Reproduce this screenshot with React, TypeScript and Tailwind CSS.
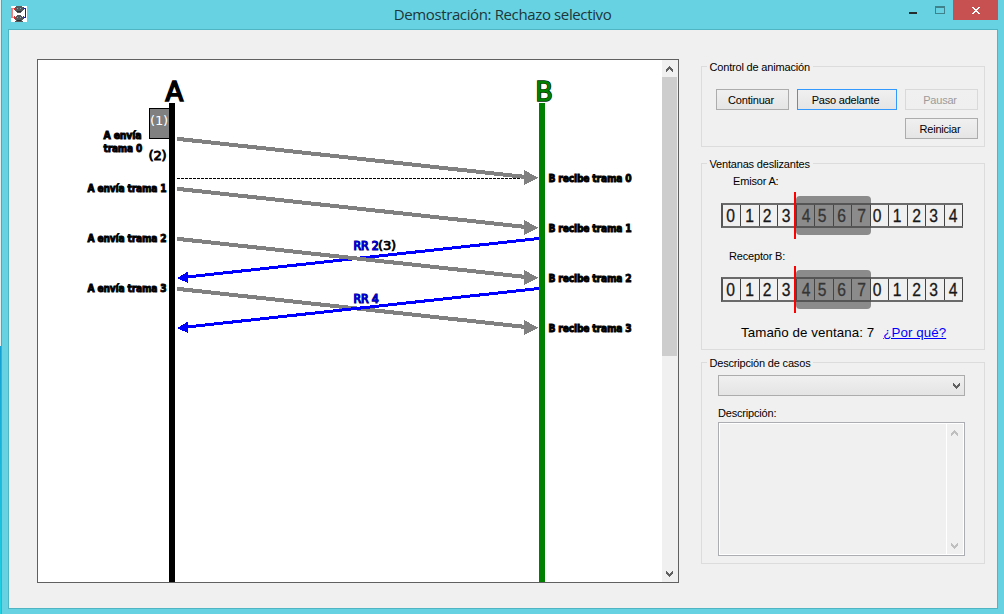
import type { ReactNode } from "react";

type LabelProps = {
  x: number;
  y: number;
  w: number;
  size?: number;
  fill?: string;
  edge?: string;
  weight?: number;
  children: string;
};

function Label({ x, y, w, size = 11, fill = "#000", edge = "#000", weight = 0.95, children }: LabelProps) {
  return (
    <text
      x={x}
      y={y}
      textLength={w}
      lengthAdjust="spacingAndGlyphs"
      fontSize={size}
      fill={fill}
      stroke={edge}
      strokeWidth={weight}
      paintOrder="stroke"
      className="font-['DejaVu_Sans_Condensed','DejaVu_Sans',sans-serif]"
    >
      {children}
    </text>
  );
}

function Frame({ y }: { y: number }) {
  return (
    <g fill="#808080" stroke="#808080">
      <line x1="177" y1={y + 0.8} x2="526" y2={y + 39} strokeWidth="4" />
      <path d={`M524 ${y + 32}V${y + 47}L538.500 ${y + 40}Z`} stroke="none" />
    </g>
  );
}

function Ack({ y }: { y: number }) {
  return (
    <g fill="#00f" stroke="#00f">
      <line x1="539" y1={y + 0.5} x2="184" y2={y + 39.3} strokeWidth="3" />
      <path d={`M188 ${y + 33.5}V${y + 45}L177 ${y + 40}Z`} stroke="none" />
    </g>
  );
}

function Diagram() {
  return (
    <svg width="624" height="522" viewBox="38 60 624 522" className="block shrink-0 bg-white">
      <g shapeRendering="crispEdges">
        <rect x="149.5" y="108.5" width="22" height="30" fill="#808080" stroke="#000" />
        <rect x="169" y="103" width="6" height="479" fill="#000" />
        <rect x="539" y="103" width="6" height="479" fill="#008000" />
        <line x1="177" y1="178.5" x2="524" y2="178.5" stroke="#000" strokeDasharray="3 1" />
        <Frame y={138} />
        <Frame y={188} />
        <Ack y={238} />
        <Frame y={238} />
        <Frame y={288} />
        <Ack y={288} />
      </g>
      <Label x={165.5} y={101} w={17.5} size={27} weight={1.6}>A</Label>
      <Label x={535.3} y={101} w={17.5} size={27} fill="#008000" edge="#003000" weight={1.4}>B</Label>
      <Label x={150} y={125} w={18} size={13} fill="#fff" edge="none" weight={0}>(1)</Label>
      <Label x={148.5} y={160} w={18} size={13} weight={0.8}>(2)</Label>
      <g fontWeight="bold">
        <Label x={103.5} y={139} w={38}>A envía</Label>
        <Label x={103.5} y={152} w={38.5}>trama 0</Label>
        <Label x={87.5} y={192} w={79}>A envía trama 1</Label>
        <Label x={87.5} y={242} w={79}>A envía trama 2</Label>
        <Label x={87.5} y={292} w={79}>A envía trama 3</Label>
        <Label x={548.5} y={182} w={83}>B recibe trama 0</Label>
        <Label x={548.5} y={232} w={83}>B recibe trama 1</Label>
        <Label x={548.5} y={282} w={83}>B recibe trama 2</Label>
        <Label x={548.5} y={332} w={83}>B recibe trama 3</Label>
      </g>
      <Label x={353.5} y={250} w={25} size={12} fill="#0000e0" edge="#000080" weight={1.2}>RR 2</Label>
      <Label x={378} y={250} w={18} size={13} weight={0.7}>(3)</Label>
      <Label x={353.5} y={303} w={25} size={12} fill="#0000e0" edge="#000080" weight={1.2}>RR 4</Label>
    </svg>
  );
}

function Chevron({ down = false, color = "#606060" }: { down?: boolean; color?: string }) {
  return (
    <svg width="7" height="6" viewBox="0 0 7 6" shapeRendering="crispEdges" className="block">
      <path
        d={down ? "M0 0h1v1h1v1h1v1h1v-1h1v-1h1v-1h1v3h-1v1h-1v1h-1v1h-1v-1h-1v-1h-1v-1h-1z" : "M3 0h1v1h1v1h1v1h1v3h-1v-1h-1v-1h-1v-1h-1v1h-1v1h-1v1h-1v-3h1v-1h1v-1h1z"}
        fill={color}
      />
    </svg>
  );
}

function Group({ title, className, children }: { title: string; className: string; children: ReactNode }) {
  return (
    <section className={`w-[284px] shrink-0 border border-[#dcdcdc] ${className}`}>
      <h2 className="-mt-[7px] ml-[5px] h-[14px] w-fit bg-[#f0f0f0] pr-[3px] pl-[2.5px] leading-[14px]">{title}</h2>
      {children}
    </section>
  );
}

function Button({ children, className = "" }: { children: string; className?: string }) {
  return (
    <button
      className={`flex h-[21px] items-center justify-center border bg-linear-to-b from-[#f0f0f0] to-[#e5e5e5] pt-px pr-[3px] leading-none tracking-[-0.2px] ${className}`}
    >
      {children}
    </button>
  );
}

const slots = [
  { n: 0, shift: "-translate-x-[1.5px]" },
  { n: 1, shift: "-translate-x-[0.5px]" },
  { n: 2, shift: "-translate-x-[2px]" },
  { n: 3, shift: "-translate-x-px" },
  { n: 4, shift: "translate-x-0" },
  { n: 5, shift: "-translate-x-[2px]" },
  { n: 6, shift: "-translate-x-[0.5px]" },
  { n: 7, shift: "translate-x-[0.5px]" },
  { n: 0, shift: "-translate-x-[2px]" },
  { n: 1, shift: "-translate-x-px" },
  { n: 2, shift: "translate-x-[0.5px]" },
  { n: 3, shift: "-translate-x-[1.5px]" },
  { n: 4, shift: "translate-x-0" },
];

function SlidingWindow() {
  return (
    <div className="relative ml-[19px] flex h-[47px] w-[242px] items-center">
      <div className="grid h-[25px] w-full grid-cols-13 border-y-2 border-l-2 border-y-[#6a6a6a] border-l-[#555]">
        {slots.map(({ n, shift }, i) => (
          <div key={i} className="flex items-center justify-center border-r-[1.5px] border-[#444]">
            <span
              className={`block scale-x-[0.87] text-[18px] leading-none tracking-normal text-[#181818] [-webkit-text-stroke:0.3px_#181818] ${shift}`}
            >
              {n}
            </span>
          </div>
        ))}
      </div>
      <div className="absolute top-[4px] left-[75px] h-[39px] w-[75px] rounded-[4px] bg-[#484848]/60" />
      <div className="absolute top-0 left-[73px] h-[47px] w-[2px] bg-[#f00]" />
    </div>
  );
}

function AppIcon() {
  return (
    <svg width="16" height="16" viewBox="0 0 16 16" shapeRendering="crispEdges" className="block">
      <rect width="16" height="16" fill="#fff" />
      <path d="M0 2h4v1H2v8h1v1H0z" fill="#f08080" />
      <path d="M3 2h1v2H3zM3 10h1v3H3z" fill="#d83030" />
      <path d="M12 2h3v10h-3v-1h2V3h-2z" fill="#1818b8" />
      <path d="M12 1h1v3h-1zM12 10h1v3h-1z" fill="#3a3ac0" />
      <path d="M5 0h6v1h1v4h-1v1h-1v1H6V6H5V5H4V1h1zM6 9h4v1h1v1h1v3h-1v1h1v1H4v-1h1v-1H4v-3h1v-1h1z" fill="#54595c" />
      <path d="M6 2h1v1H6zM9 2h1v1H9zM6 11h1v1H6zM9 11h1v1H9z" fill="#8fa6b0" />
      <path d="M6 5h4v1H6zM6 14h4v1H6z" fill="#2c2f31" />
    </svg>
  );
}

function TitleBar() {
  return (
    <header className="flex h-[29px] items-start">
      <div className="w-[200px] pt-[6px] pl-[9px]">
        <AppIcon />
      </div>
      <h1 className="flex-1 pt-[4px] pr-px text-center font-['Open_Sans','Noto_Sans',sans-serif] text-[15px] leading-[21px] tracking-[-0.37px] text-[#20363a]">
        Demostración: Rechazo selectivo
      </h1>
      <div className="flex w-[200px] justify-end pr-[6px]">
        <div className="mt-[12px] mr-[18px] h-[2px] w-[8px] bg-[#252d2f]" />
        <div className="mt-[6px] mr-[8px] h-[8px] w-[10px] border border-t-2 border-[#3f828c]" />
        <div className="flex h-[20px] w-[45px] items-center justify-center bg-[#c75050] pt-px">
          <svg width="8" height="7" viewBox="0 0 8 7" shapeRendering="crispEdges">
            <path d="M0 0h2v1h1v1h2V1h1V0h2v1H7v1H6v1H5v1h1v1h1v1h1v1H6V6H5V5H3v1H2v1H0V6h1V5h1V4h1V3H2V2H1V1H0z" fill="#fff" />
          </svg>
        </div>
      </div>
    </header>
  );
}

export default function App() {
  return (
    <div className="flex h-[614px] w-[1004px] overflow-hidden bg-[#67d3e2] font-['Liberation_Sans',Arial,sans-serif] text-[11px] tracking-[-0.18px] text-black">
      <div className="flex w-px flex-col">
        <div className="h-[346px] bg-[#e4eff0]" />
        <div className="flex-1 bg-linear-to-b from-[#159fd2] to-[#20d4e5]" />
      </div>
      <div className="flex flex-1 flex-col border-l border-[#4eaab8]">
        <TitleBar />
        <main className="mr-[6px] ml-[6px] flex h-[580px] border border-[#4fb5c2] bg-[#f0f0f0] pt-[29px] pl-[28px]">
          <div className="flex h-[524px] w-[642px] shrink-0 border border-[#606060] bg-[#f0f0f0]">
            <Diagram />
            <div className="flex w-[15px] flex-col">
              <div className="flex h-[17px] items-center justify-center pt-px">
                <Chevron />
              </div>
              <div className="h-[279px] bg-[#cdcdcd]" />
              <div className="flex flex-1 items-end justify-center pb-[5px]">
                <Chevron down />
              </div>
            </div>
          </div>

          <aside className="ml-[22px] flex flex-col pt-[7px]">
            <Group title="Control de animación" className="h-[81px]">
              <div className="mt-[15px] flex pl-[14px]">
                <Button className="w-[73px] border-[#acacac]">Continuar</Button>
                <Button className="ml-[8px] w-[100px] border-[#3399ff]">Paso adelante</Button>
                <Button className="ml-[8px] w-[73px] border-[#d9d9d9] from-[#efefef] to-[#efefef] text-[#9b9b9b]">Pausar</Button>
              </div>
              <div className="mt-[8px] flex pl-[203px]">
                <Button className="w-[73px] border-[#acacac]">Reiniciar</Button>
              </div>
            </Group>

            <Group title="Ventanas deslizantes" className="mt-[16px] h-[187px]">
              <p className="mt-[3px] ml-[31px] h-[14px] leading-[14px]">Emisor A:</p>
              <div className="mt-[4px]">
                <SlidingWindow />
              </div>
              <p className="mt-[10px] ml-[27px] h-[14px] leading-[14px]">Receptor B:</p>
              <div className="mt-[3px]">
                <SlidingWindow />
              </div>
              <p className="mt-[12px] ml-[39px] flex h-[16px] text-[13.33px] leading-[16px] tracking-[0.07px]">
                <span>Tamaño de ventana: 7</span>
                <a className="ml-[9px] text-[#00f] underline">¿Por qué?</a>
              </p>
            </Group>

            <Group title="Descripción de casos" className="mt-[12px] h-[202px]">
              <div className="mt-[5px] ml-[16px] flex h-[21px] w-[247px] items-center justify-end border border-[#acacac] bg-linear-to-b from-[#f0f0f0] to-[#e4e4e4] pr-[4px]">
                <Chevron down />
              </div>
              <p className="mt-[10px] ml-[16px] h-[14px] leading-[14px]">Descripción:</p>
              <div className="mt-[2px] ml-[16px] flex h-[134px] w-[247px] justify-end border border-[#abadb3] bg-[#f0f0f0]">
                <div className="flex flex-1 border border-white">
                  <div className="flex-1" />
                  <div className="flex w-[17px] flex-col items-center justify-between border-l border-white pt-[6px] pr-px pb-[5px]">
                    <Chevron color="#bfbfbf" />
                    <Chevron down color="#bfbfbf" />
                  </div>
                </div>
              </div>
            </Group>
          </aside>
        </main>
      </div>
    </div>
  );
}
